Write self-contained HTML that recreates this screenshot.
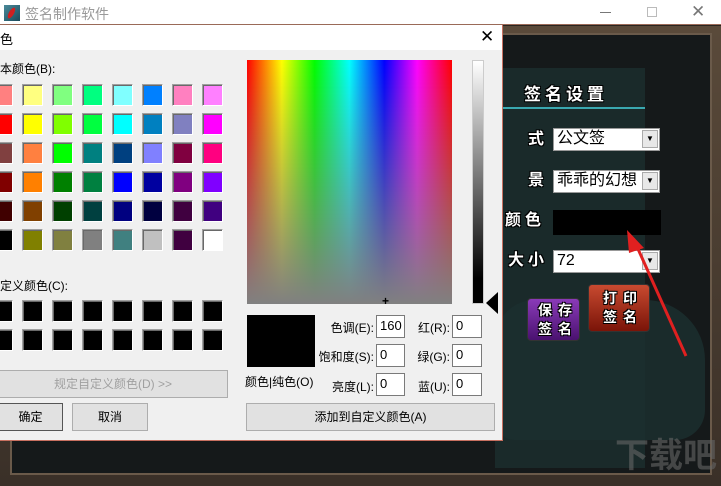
<!DOCTYPE html>
<html><head><meta charset="utf-8"><style>
*{margin:0;padding:0;box-sizing:border-box}
html,body{width:721px;height:486px;overflow:hidden}
body{position:relative;background:#2a2520;font-family:"Liberation Sans","Noto Sans CJK SC",sans-serif;font-size:12px;color:#000}
.a{position:absolute;white-space:nowrap}
.sw{position:absolute;width:21px;height:22px;border:1px solid #a0a0a0;border-right-color:#fff;border-bottom-color:#fff;box-shadow:inset 1px 1px 0 #696969}
.btn{position:absolute;background:#e1e1e1;border:1px solid #adadad;text-align:center;line-height:26px;font-size:12px;white-space:nowrap}
.inp{position:absolute;background:#fff;border:1px solid #7a7a7a;padding-left:3px;line-height:20px;font-size:13px}
.lab{position:absolute;font-size:12px;text-align:right;white-space:nowrap}
.wt{position:absolute;color:#fff;font-weight:bold;font-size:16px;line-height:18px;text-shadow:1px 1px 0 #000,-1px -1px 0 #000,1px -1px 0 #000,-1px 1px 0 #000;letter-spacing:4px;white-space:nowrap}
.cb{position:absolute;background:#fff;border:1px solid #999;font-size:16px;line-height:20px;padding-left:3px;white-space:nowrap}
.cb i{position:absolute;right:1px;top:1px;width:16px;height:18px;background:#e8e8e8;border:1px solid #aaa;font-style:normal;font-size:8px;text-align:center;line-height:16px}
</style></head><body>
<div class="a" style="left:0;top:0;width:721px;height:25px;background:#fff;border-bottom:1px solid #9a6a58"></div>
<div class="a" style="left:4px;top:5px;width:16px;height:16px;background:linear-gradient(135deg,#4a8a9a,#1a4a5a)"><div class="a" style="left:5px;top:2px;width:5px;height:12px;background:#d02020;transform:rotate(30deg);border-radius:50%"></div></div>
<div class="a" style="left:25px;top:4px;color:#999;font-size:14px">签名制作软件</div>
<div class="a" style="left:600px;top:12px;width:11px;height:1px;background:#777"></div>
<div class="a" style="left:647px;top:7px;width:10px;height:10px;border:1px solid #bbb"></div>
<div class="a" style="left:691px;top:2px;color:#777;font-size:17px">✕</div>
<div class="a" style="left:0;top:26px;width:721px;height:460px;background:linear-gradient(#5a4a3a,#3a3028);"></div>
<div class="a" style="left:10px;top:33px;width:702px;height:442px;background:#15191a;border:2px solid #6a5a4a"></div>
<div class="a" style="left:495px;top:68px;width:150px;height:400px;background:#1c2e2e;opacity:.8"></div>
<div class="a" style="left:495px;top:300px;width:210px;height:140px;background:#1c3030;border-radius:40px 60px 30px 20px;opacity:.8"></div>
<div class="wt" style="left:524px;top:86px;font-size:17px">签名设置</div>
<div class="a" style="left:500px;top:107px;width:145px;height:2px;background:#3aa8b0"></div>
<div class="wt" style="left:528px;top:131px">式</div>
<div class="cb" style="left:553px;top:128px;width:107px;height:23px">公文签<i>▼</i></div>
<div class="wt" style="left:528px;top:172px">景</div>
<div class="cb" style="left:553px;top:170px;width:107px;height:23px">乖乖的幻想<i>▼</i></div>
<div class="wt" style="left:505px;top:212px">颜色</div>
<div class="a" style="left:553px;top:210px;width:108px;height:25px;background:#000"></div>
<div class="wt" style="left:508px;top:252px">大小</div>
<div class="cb" style="left:553px;top:250px;width:107px;height:23px">72<i>▼</i></div>
<div class="a" style="left:527px;top:298px;width:53px;height:43px;background:linear-gradient(#8a3ab8,#4a1270);border-radius:4px;border:1px solid #333"></div>
<div class="wt" style="left:538px;top:301px;font-size:14px;letter-spacing:6px;line-height:19px">保存<br>签名</div>
<div class="a" style="left:588px;top:284px;width:62px;height:48px;background:linear-gradient(#c84a30,#7a1408);border-radius:4px;border:1px solid #333"></div>
<div class="wt" style="left:603px;top:289px;font-size:14px;letter-spacing:6px;line-height:19px">打印<br>签名</div>
<div class="a" style="left:615px;top:438px;color:#666;font-size:34px;line-height:36px;font-weight:bold;opacity:.6">下载吧</div>
<svg class="a" style="left:0;top:0" width="721" height="486"><line x1="686" y1="356" x2="634" y2="240" stroke="#e02020" stroke-width="3"/><polygon points="627,230 644,248 629,253" fill="#e02020"/></svg>
<div class="a" style="left:0;top:25px;width:503px;height:416px;background:#f0f0f0;border-right:1px solid #c87060;border-bottom:1px solid #c87060"></div>
<div class="a" style="left:0;top:25px;width:502px;height:25px;background:#fff"></div>
<div class="a" style="left:0;top:29px;font-size:13px">色</div>
<div class="a" style="left:480px;top:27px;font-size:17px">✕</div>
<div class="a" style="left:0;top:60px;font-size:12px">本颜色(B):</div>
<div class="a" style="left:0;top:277px;font-size:12px">定义颜色(C):</div>
<div id="g"></div>
<div class="btn" style="left:-2px;top:370px;width:230px;height:28px;color:#a0a0a0">规定自定义颜色(D) &gt;&gt;</div>
<div class="btn" style="left:-2px;top:403px;width:65px;height:28px;border:1px solid #555;line-height:26px">确定</div>
<div class="btn" style="left:72px;top:403px;width:76px;height:28px">取消</div>
<div class="a" style="left:247px;top:60px;width:205px;height:244px;background:linear-gradient(rgba(128,128,128,0),#808080),linear-gradient(90deg,#f00,#ff0 17%,#0f0 33%,#0ff 50%,#00f 67%,#f0f 83%,#f00)"></div>
<div class="a" style="left:382px;top:294px;font-size:12px;font-weight:bold">+</div>
<div class="a" style="left:472px;top:60px;width:12px;height:244px;background:linear-gradient(#fff,#000 90%);border:1px solid #ccc"></div>
<div class="a" style="left:486px;top:292px;width:0;height:0;border-top:11px solid transparent;border-bottom:11px solid transparent;border-right:12px solid #000"></div>
<div class="a" style="left:247px;top:315px;width:68px;height:52px;background:#000"></div>
<div class="a" style="left:245px;top:373px">颜色|纯色(O)</div>
<div class="lab" style="left:316px;top:319px;width:58px">色调(E):</div>
<div class="lab" style="left:312px;top:348px;width:62px">饱和度(S):</div>
<div class="lab" style="left:316px;top:378px;width:58px">亮度(L):</div>
<div class="inp" style="left:376px;top:315px;width:29px;height:23px">160</div>
<div class="inp" style="left:376px;top:344px;width:29px;height:23px">0</div>
<div class="inp" style="left:376px;top:373px;width:29px;height:23px">0</div>
<div class="lab" style="left:408px;top:319px;width:42px">红(R):</div>
<div class="lab" style="left:408px;top:348px;width:42px">绿(G):</div>
<div class="lab" style="left:408px;top:378px;width:42px">蓝(U):</div>
<div class="inp" style="left:452px;top:315px;width:30px;height:23px">0</div>
<div class="inp" style="left:452px;top:344px;width:30px;height:23px">0</div>
<div class="inp" style="left:452px;top:373px;width:30px;height:23px">0</div>
<div class="btn" style="left:246px;top:403px;width:249px;height:28px">添加到自定义颜色(A)</div>
<script>
var c=[["#ff8080","#ffff80","#80ff80","#00ff80","#80ffff","#0080ff","#ff80c0","#ff80ff"],
["#ff0000","#ffff00","#80ff00","#00ff40","#00ffff","#0080c0","#8080c0","#ff00ff"],
["#804040","#ff8040","#00ff00","#008080","#004080","#8080ff","#800040","#ff0080"],
["#800000","#ff8000","#008000","#008040","#0000ff","#0000a0","#800080","#8000ff"],
["#400000","#804000","#004000","#004040","#000080","#000040","#400040","#400080"],
["#000000","#808000","#808040","#808080","#408080","#c0c0c0","#400040","#ffffff"]];
var h="";
for(var r=0;r<6;r++)for(var k=0;k<8;k++)h+='<div class="sw" style="left:'+(-8+k*30)+'px;top:'+(84+r*29)+'px;background:'+c[r][k]+'"></div>';
for(var r=0;r<2;r++)for(var k=0;k<8;k++)h+='<div class="sw" style="left:'+(-8+k*30)+'px;top:'+(300+r*29)+'px;background:#000"></div>';
document.getElementById("g").innerHTML=h;
</script>
</body></html>
